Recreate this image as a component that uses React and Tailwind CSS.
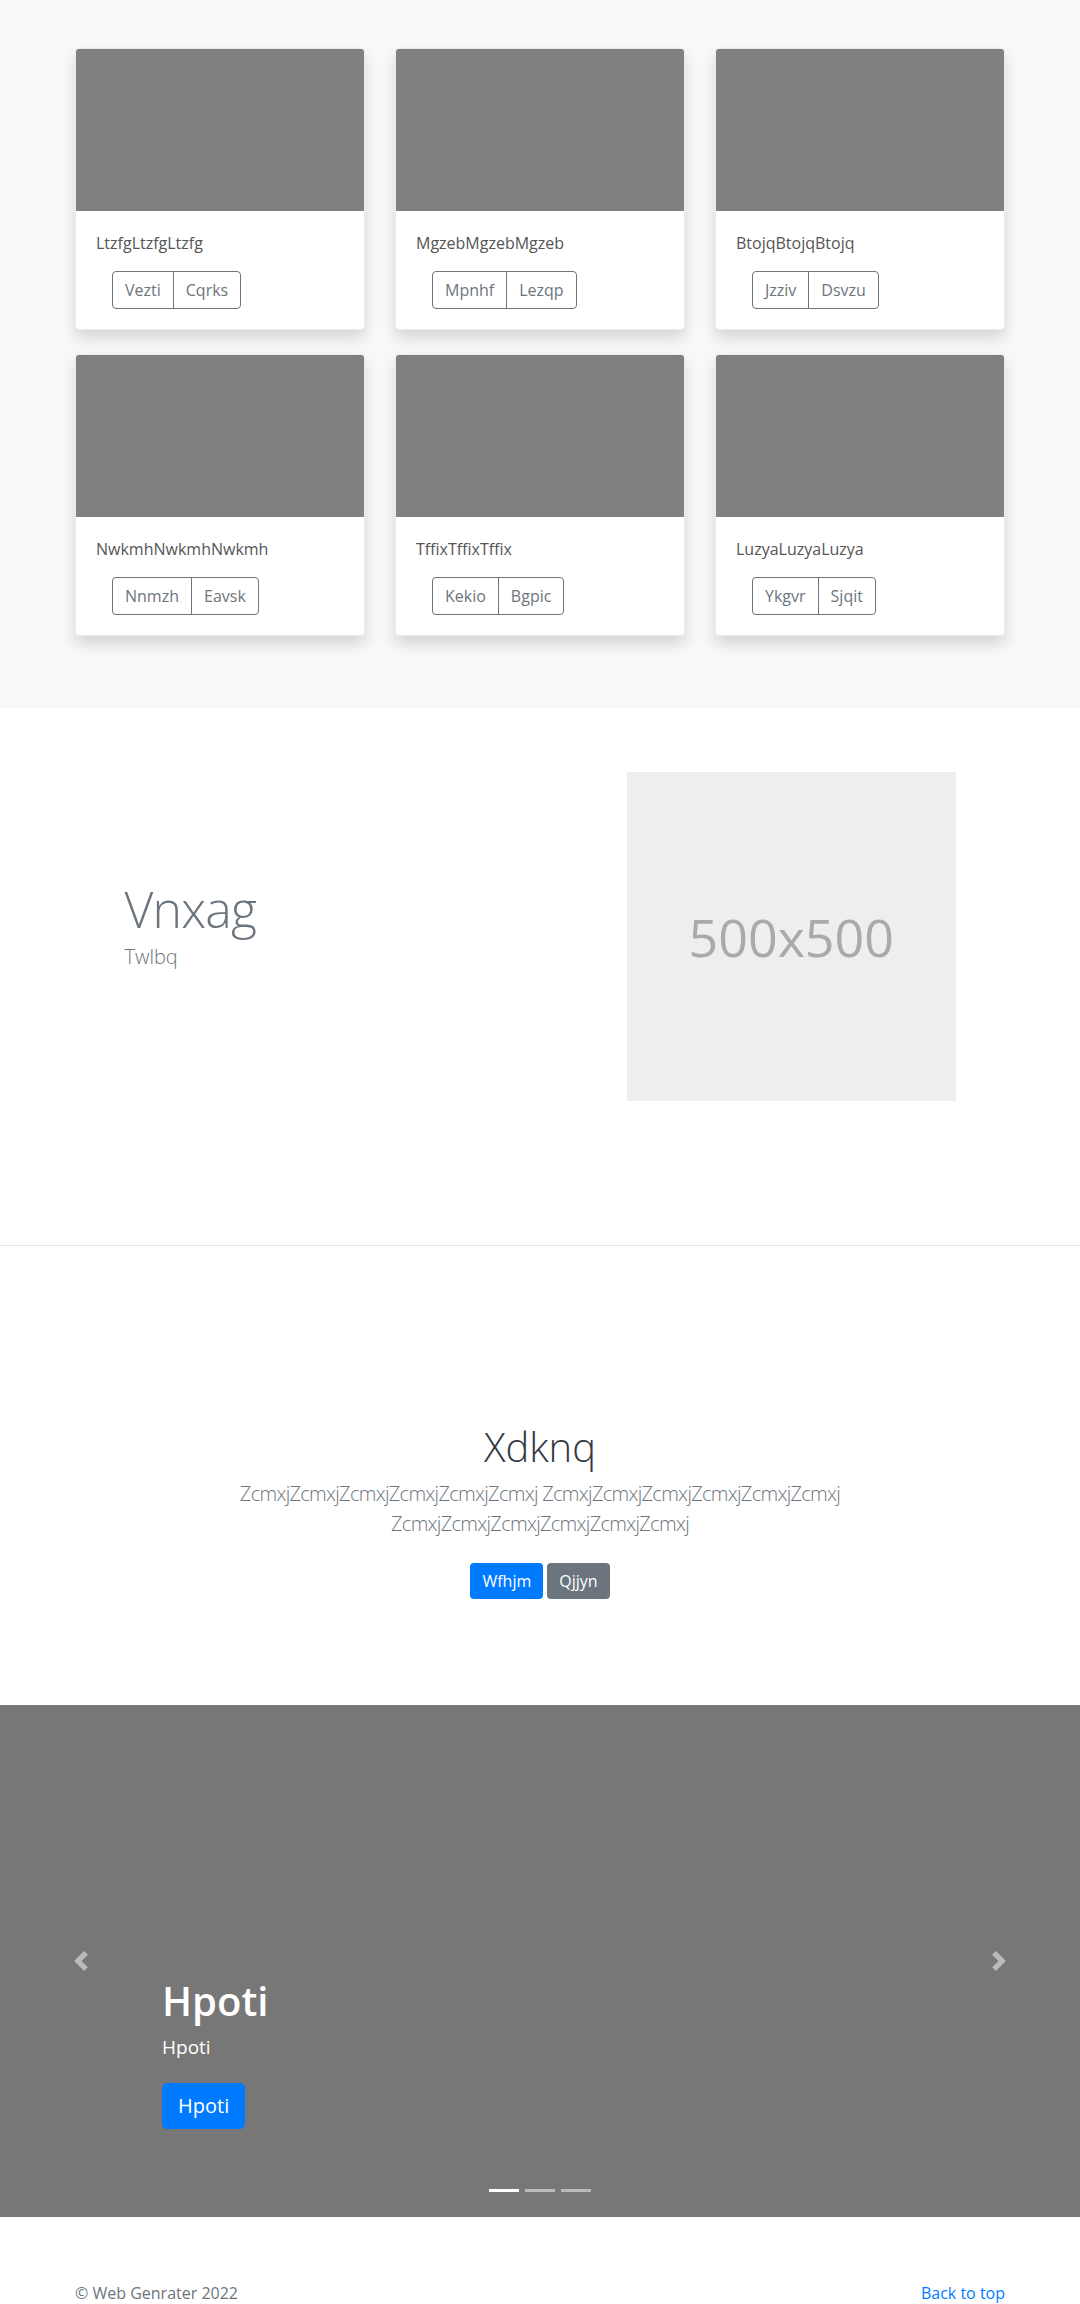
const cards = [
  { title: 'LtzfgLtzfgLtzfg', a: 'Vezti', b: 'Cqrks' },
  { title: 'MgzebMgzebMgzeb', a: 'Mpnhf', b: 'Lezqp' },
  { title: 'BtojqBtojqBtojq', a: 'Jzziv', b: 'Dsvzu' },
  { title: 'NwkmhNwkmhNwkmh', a: 'Nnmzh', b: 'Eavsk' },
  { title: 'TffixTffixTffix', a: 'Kekio', b: 'Bgpic' },
  { title: 'LuzyaLuzyaLuzya', a: 'Ykgvr', b: 'Sjqit' },
];

const Card = ({ title, a, b }) => (
  <div className="flex flex-col rounded bg-white border border-[rgba(0,0,0,0.08)] shadow-[0_8px_16px_rgba(0,0,0,0.15)] overflow-hidden">
    <div className="h-[162px] bg-[#808080]" />
    <div className="p-5">
      <p className="text-base leading-6 text-[#555555] mb-4">{title}</p>
      <div className="ml-4 inline-flex rounded border border-[#6c757d] text-[#6c757d] text-base leading-6">
        <button className="px-3 py-[6px] border-r border-[#6c757d]">{a}</button>
        <button className="px-3 py-[6px]">{b}</button>
      </div>
    </div>
  </div>
);

const Chevron = ({ dir }) => (
  <svg width="20" height="20" viewBox="0 0 8 8" fill="#fff" className="opacity-50">
    {dir === 'prev' ? (
      <path d="M5.25 0l-4 4 4 4 1.5-1.5L4.25 4l2.5-2.5L5.25 0z" />
    ) : (
      <path d="M2.75 0l-1.5 1.5L3.75 4l-2.5 2.5L2.75 8l4-4-4-4z" />
    )}
  </svg>
);

export default function App() {
  return (
    <div className="font-['Open_Sans','Noto_Sans',sans-serif] text-[#212529] bg-white">
      {/* Album */}
      <section className="bg-[#f8f9fa] pt-12 pb-[72px]">
        <div className="w-[930px] mx-auto grid grid-cols-3 gap-x-[30px] gap-y-6">
          {cards.map((c) => (
            <Card key={c.title} {...c} />
          ))}
        </div>
      </section>

      {/* Featurette */}
      <section className="h-[537px] pt-[64px]">
        <div className="w-[861px] mx-auto flex">
          <div className="w-7/12 px-[15px]">
            <h2 className="mt-[112px] text-[50px] leading-none font-light tracking-[-0.8px] text-[#6c757d]">Vnxag</h2>
            <p className="mt-2 text-xl leading-[30px] font-light text-[#6c757d]">Twlbq</p>
          </div>
          <div className="w-5/12 px-[15px]">
            <div className="w-[329px] h-[329px] bg-[#eeeeee] flex items-center justify-center text-[52px] text-[#aaaaaa]">
              500x500
            </div>
          </div>
        </div>
      </section>

      <hr className="border-0 border-t border-[#e5e5e5]" />

      {/* Jumbotron */}
      <section className="pt-[177px] pb-[98px] text-center">
        <div className="w-[700px] mx-auto">
          <h1 className="text-[40px] leading-[1.2] font-light text-[#343a40] mb-2">Xdknq</h1>
          <p className="text-xl leading-[30px] font-light tracking-[-0.7px] text-[#6c757d] mb-6">
            ZcmxjZcmxjZcmxjZcmxjZcmxjZcmxj ZcmxjZcmxjZcmxjZcmxjZcmxjZcmxj ZcmxjZcmxjZcmxjZcmxjZcmxjZcmxj
          </p>
          <div className="flex justify-center gap-1 my-2">
            <button className="bg-[#007bff] text-white rounded px-3 py-[6px] text-base leading-6">Wfhjm</button>
            <button className="bg-[#6c757d] text-white rounded px-3 py-[6px] text-base leading-6">Qjjyn</button>
          </div>
        </div>
      </section>

      {/* Carousel */}
      <section className="relative h-[512px] bg-[#777777] flex flex-col justify-end pl-[162px] pb-[88px]">
        <button className="absolute left-0 top-0 bottom-0 w-[162px] flex items-center justify-center">
          <Chevron dir="prev" />
        </button>
        <button className="absolute right-0 top-0 bottom-0 w-[162px] flex items-center justify-center">
          <Chevron dir="next" />
        </button>
        <h1 className="text-[40px] leading-[1.2] font-semibold text-white mb-2">Hpoti</h1>
        <p className="text-[19px] leading-[28.5px] text-white mb-[22px]">Hpoti</p>
        <div>
          <a className="inline-block bg-[#007bff] text-white rounded-[5px] px-4 py-2 text-xl leading-[30px]">Hpoti</a>
        </div>
        <div className="absolute left-0 right-0 bottom-[25px] flex justify-center gap-[6px]">
          <span className="w-[30px] h-[3px] bg-white" />
          <span className="w-[30px] h-[3px] bg-white/50" />
          <span className="w-[30px] h-[3px] bg-white/50" />
        </div>
      </section>

      {/* Footer */}
      <footer className="pt-16 pb-12">
        <div className="w-[930px] mx-auto flex justify-between text-base leading-6">
          <p className="text-[#6c757d]">© Web Genrater 2022</p>
          <a className="text-[#007bff]">Back to top</a>
        </div>
      </footer>
    </div>
  );
}
